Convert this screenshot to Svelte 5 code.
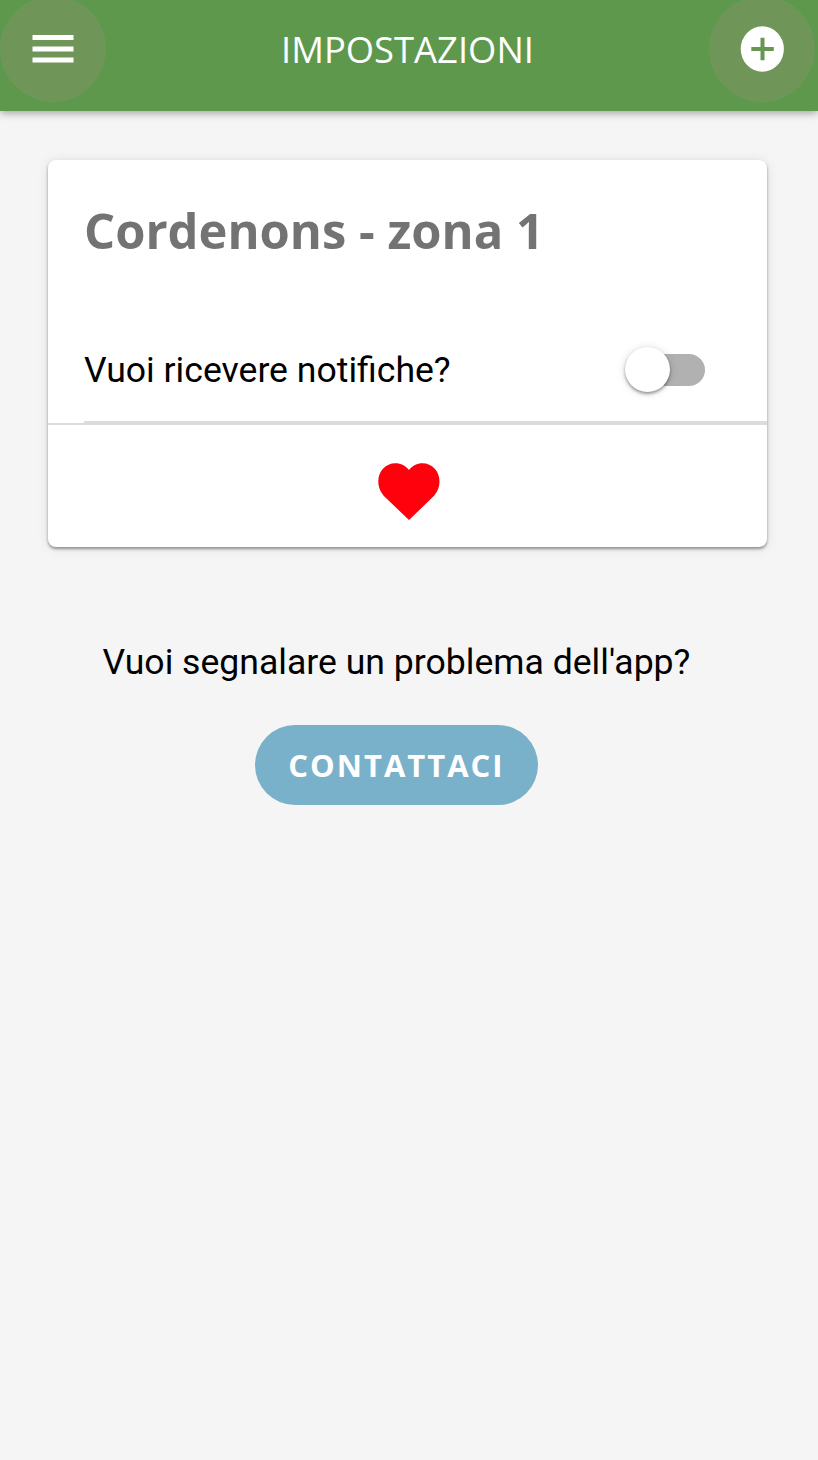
<script lang="ts">
	/**
	 * props
	 */
	export let zone = 'Cordenons - zona 1'

	/**
	 * states
	 */
	let notificationsOn = false

	function toggleNotifications() {
		notificationsOn = !notificationsOn
	}
</script>

<div class="page">
	<header class="toolbar">
		<button class="round" aria-label="Menu">
			<svg width="42" height="28" viewBox="0 0 42 28">
				<path d="M.5 0h41v5h-41zM.5 11.5h41v5h-41zM.5 22.5h41v5h-41z" fill="#fff" />
			</svg>
		</button>
		<h1>IMPOSTAZIONI</h1>
		<button class="round" aria-label="Aggiungi">
			<svg width="44" height="46" viewBox="0 0 44 46">
				<ellipse cx="22.3" cy="23" rx="21.6" ry="22.8" fill="#fff" />
				<path d="M11.300 23h22.500M22.500 11.700v22.500" stroke="#68954f" stroke-width="4" />
			</svg>
		</button>
	</header>

	<main>
		<section class="card">
			<h2>{zone}</h2>
			<div class="item">
				<span class="question">Vuoi ricevere notifiche?</span>
				<button
					class="toggle"
					class:on={notificationsOn}
					role="switch"
					aria-checked={notificationsOn}
					aria-label="Notifiche"
					on:click={toggleNotifications}
				>
					<span class="knob"></span>
				</button>
			</div>
			<div class="favorite">
				<svg width="62" height="57" viewBox="0 0 62 57">
					<path
						d="M31 57L7.500 34.600C3 30.300.3 24.800.3 18.300C.3 8 7.800.2 17.300.2C22.800.2 27.800 2.700 31 7C34.200 2.700 39.200.2 44.500.2C54 .2 61.500 8 61.500 18.300C61.500 24.800 58.800 30.300 54.300 34.600Z"
						fill="#ff000d"
					/>
				</svg>
			</div>
		</section>

		<section class="contact">
			<p>Vuoi segnalare un problema dell'app?</p>
			<button class="contact-button">CONTATTACI</button>
		</section>
	</main>
</div>

<style>
	:global(body) {
		background-color: #f5f5f5;
	}

	.page {
		min-height: 1460px;
		overflow: hidden;
		background-color: #f5f5f5;
		color: #000;
		font-family: Roboto, sans-serif;
		font-size: 35.6px;
	}

	button {
		border: 0;
		padding: 0;
		cursor: pointer;
	}

	h1,
	h2,
	p {
		margin: 0;
	}

	.toolbar {
		display: flex;
		align-items: center;
		justify-content: space-between;
		box-sizing: border-box;
		height: 111px;
		padding: 0 3px 13px 0;
		background-color: #5e984d;
		box-shadow: 0 2px 8px rgba(0, 0, 0, 0.36);
	}

	h1 {
		font-family: 'Open Sans', sans-serif;
		font-size: 36.4px;
		font-weight: 400;
		line-height: 50px;
		color: #fff;
	}

	.round {
		display: flex;
		align-items: center;
		justify-content: center;
		flex: none;
		box-sizing: border-box;
		width: 106px;
		height: 106px;
		border: 1px solid #6b9a5b;
		border-radius: 50%;
		background-color: #6f9658;
	}

	main {
		padding: 49px 51px 0 48px;
	}

	.card {
		border-radius: 8px;
		background-color: #fff;
		box-shadow:
			0 2px 3px rgba(0, 0, 0, 0.38),
			0 1px 12px rgba(0, 0, 0, 0.1);
	}

	h2 {
		padding: 35px 36px 1px;
		font-family: 'Open Sans', sans-serif;
		font-size: 48.9px;
		font-weight: 700;
		line-height: 70px;
		color: #737373;
	}

	.item {
		display: flex;
		align-items: center;
		justify-content: space-between;
		height: 103px;
		margin: 52px 0 0 36px;
		padding-right: 62px;
		border-bottom: 2px solid #dcdcdc;
	}

	.toggle {
		display: flex;
		align-items: center;
		width: 75px;
		height: 32px;
		border-radius: 16px;
		background-color: #b1b1b1;
	}

	.toggle.on {
		justify-content: flex-end;
		background-color: #9dc3d4;
	}

	.knob {
		flex: none;
		width: 45px;
		height: 45px;
		margin-left: -5px;
		border-radius: 50%;
		background-color: #fff;
		box-shadow:
			0 2px 3px rgba(0, 0, 0, 0.35),
			0 1px 9px rgba(0, 0, 0, 0.16);
	}

	.favorite {
		display: flex;
		align-items: center;
		justify-content: center;
		box-sizing: border-box;
		height: 124px;
		padding: 10px 0 0 2px;
		border-top: 2px solid #dcdcdc;
	}

	.contact {
		display: flex;
		flex-direction: column;
		align-items: center;
		padding: 93px 22px 0 0;
	}

	.contact p {
		line-height: 44px;
	}

	.contact-button {
		width: 283px;
		height: 80px;
		margin-top: 41px;
		border-radius: 40px;
		background-color: #7ab1ca;
		color: #fff;
		font-family: 'Open Sans', sans-serif;
		font-size: 31px;
		font-weight: 700;
		letter-spacing: 2px;
	}
</style>
